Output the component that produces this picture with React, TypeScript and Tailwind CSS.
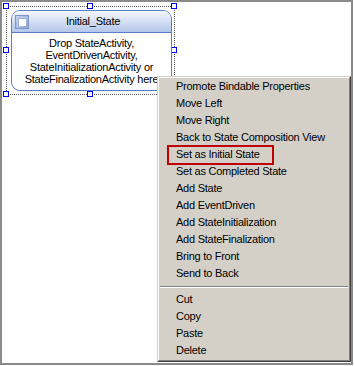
const menuGroups = [
  [
    "Promote Bindable Properties",
    "Move Left",
    "Move Right",
    "Back to State Composition View",
    "Set as Initial State",
    "Set as Completed State",
    "Add State",
    "Add EventDriven",
    "Add StateInitialization",
    "Add StateFinalization",
    "Bring to Front",
    "Send to Back",
  ],
  ["Cut", "Copy", "Paste", "Delete"],
];

// selection handle centres, relative to the designer canvas
const handles = [
  [4, 4],
  [88, 4],
  [172, 4],
  [4, 48],
  [172, 48],
  [4, 92],
  [88, 92],
  [172, 92],
];

const StateShape = () => {
  return (
    <div className="absolute left-[9px] top-[8px] w-[161px] h-[81px] rounded-[9px] border border-[#5a7fc8] bg-white overflow-hidden">
      <div className="h-[22px] border-b border-[#5a7fc8] bg-gradient-to-b from-[#f4f7fd] to-[#b4c6ea] flex items-center">
        <div className="ml-[3px] w-[14px] h-[14px] border border-[#7d96c8] bg-gradient-to-br from-[#c6d3ee] to-[#8fa7d6] p-[2px]">
          <div className="w-full h-full bg-white border-t border-l border-[#9fb3dc]" />
        </div>
        <span className="flex-1 text-center pr-[14px]">Initial_State</span>
      </div>
      <div className="pt-[4px] text-center leading-[12px]">
        <div>Drop StateActivity,</div>
        <div>EventDrivenActivity,</div>
        <div>StateInitializationActivity or</div>
        <div>StateFinalizationActivity here</div>
      </div>
    </div>
  );
};

const ContextMenu = () => {
  return (
    <div className="absolute left-[155px] top-[74px] w-[194px] border border-t-[#d4d0c8] border-l-[#d4d0c8] border-r-[#404040] border-b-[#404040]">
      <div className="border border-t-white border-l-white border-r-[#808080] border-b-[#808080] bg-[#d4d0c8] pb-[1px]">
        {menuGroups.map((group, gi) => (
          <div key={gi}>
            {gi > 0 && (
              <div className="h-[9px] flex flex-col justify-center px-px">
                <div className="h-px bg-[#808080]" />
                <div className="h-px bg-white" />
              </div>
            )}
            {group.map((item) => (
              <div key={item} className="h-[17px] flex items-center pl-[17px] text-black">
                {item}
              </div>
            ))}
          </div>
        ))}
      </div>
    </div>
  );
};

export default function App() {
  return (
    <div
      className="w-[354px] h-[366px] bg-white text-[11px] tracking-[-0.25px] text-black"
      style={{ fontFamily: '"Liberation Sans", Arial, sans-serif' }}
    >
      <div className="relative w-[353px] h-[365px] border-2 border-[#8a8a8a] overflow-hidden">
        {/* dotted selection frame */}
        <div className="absolute left-[4px] top-[4px] w-[169px] h-[89px] border border-dotted border-[#555]" />
        {handles.map(([x, y], i) => (
          <div
            key={i}
            className="absolute w-[6px] h-[6px] border border-[#0000ff] bg-white"
            style={{ left: x - 3, top: y - 3 }}
          />
        ))}
        <StateShape />
        <ContextMenu />
        {/* highlight annotation */}
        <div className="absolute left-[165px] top-[143px] w-[107px] h-[20px] border-2 border-[#c00000]" />
      </div>
    </div>
  );
}
